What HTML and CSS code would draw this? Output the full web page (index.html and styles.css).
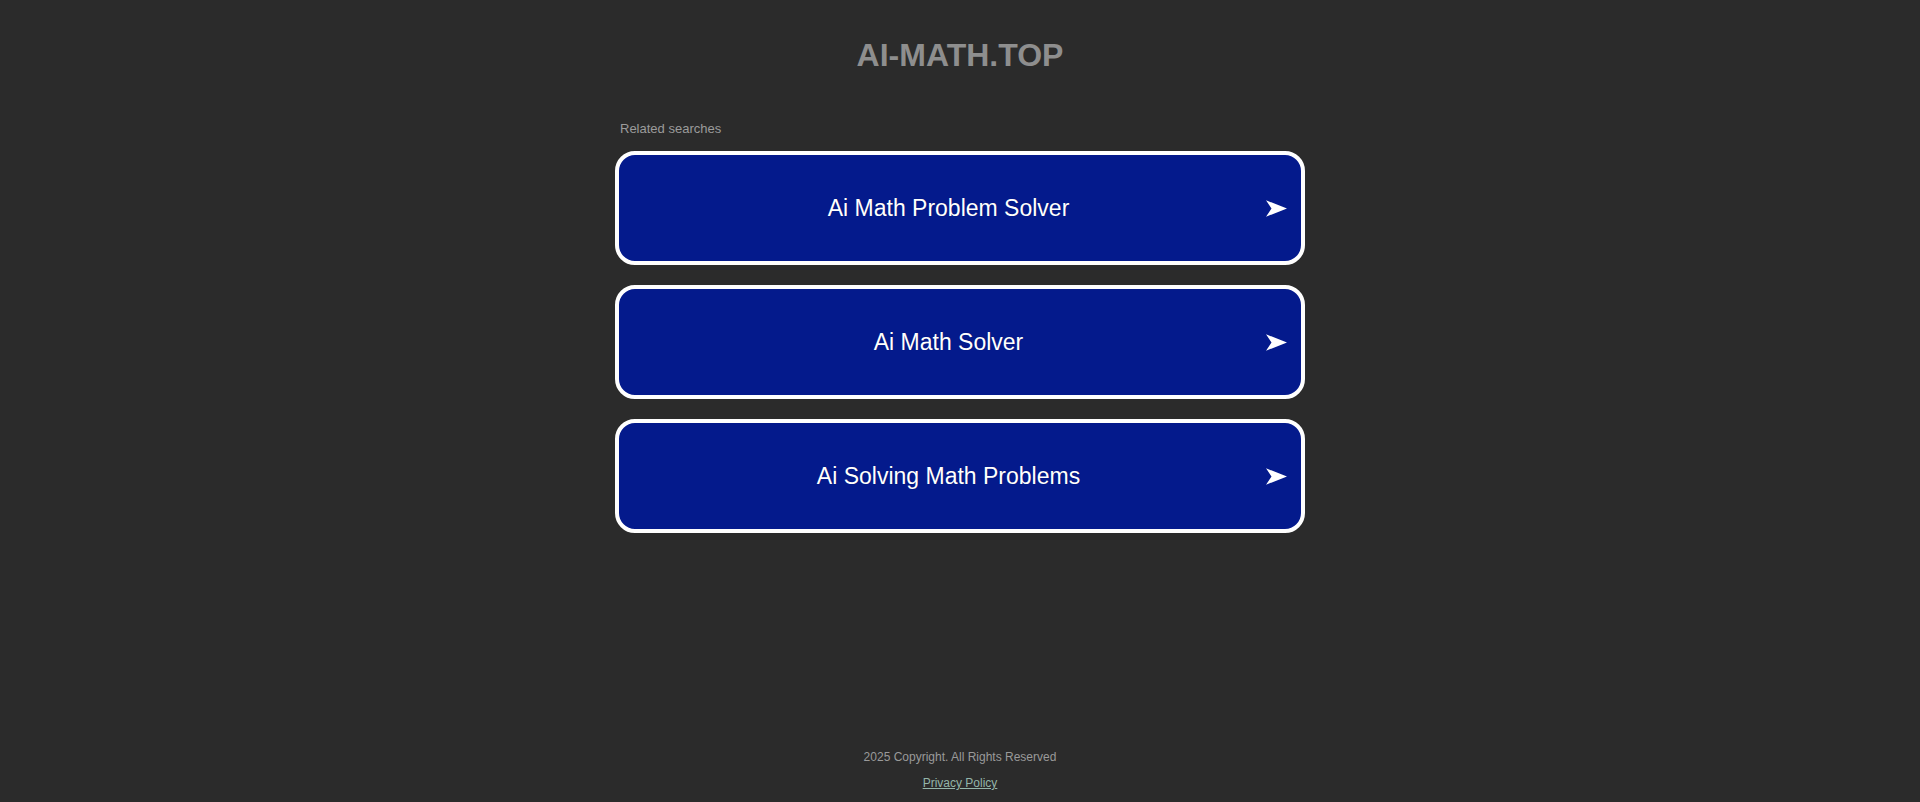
FILE: index.html
```html
<!DOCTYPE html>
<html lang="en">
<head>
<meta charset="utf-8">
<title>ai-math.top</title>
<link rel="stylesheet" href="styles.css">
</head>
<body>
<div class="page">
  <h1 class="title">AI-MATH.TOP</h1>
  <section class="related">
    <div class="label">Related searches</div>
    <div class="list">
      <a class="item" href="#">
        <span class="item-text">Ai Math Problem Solver</span>
        <svg class="arrow" width="21" height="17" viewBox="0 0 21 17"><path d="M0 0.3 L21 8.5 L0 16.7 L5.5 8.5 Z" fill="#fff"/></svg>
      </a>
      <a class="item" href="#">
        <span class="item-text">Ai Math Solver</span>
        <svg class="arrow" width="21" height="17" viewBox="0 0 21 17"><path d="M0 0.3 L21 8.5 L0 16.7 L5.5 8.5 Z" fill="#fff"/></svg>
      </a>
      <a class="item" href="#">
        <span class="item-text">Ai Solving Math Problems</span>
        <svg class="arrow" width="21" height="17" viewBox="0 0 21 17"><path d="M0 0.3 L21 8.5 L0 16.7 L5.5 8.5 Z" fill="#fff"/></svg>
      </a>
    </div>
  </section>
  <footer class="footer">
    <div class="copyright">2025 Copyright. All Rights Reserved</div>
    <div class="privacy"><a href="#">Privacy Policy</a></div>
  </footer>
</div>
</body>
</html>
```

FILE: styles.css
```css
html, body {
  margin: 0;
  padding: 0;
  background: #2b2b2b;
  font-family: "Liberation Sans", Arial, sans-serif;
}

.page {
  min-height: 100vh;
  display: flex;
  flex-direction: column;
  align-items: center;
  box-sizing: border-box;
}

.title {
  margin: 37px 0 0;
  font-size: 32px;
  line-height: 36px;
  font-weight: bold;
  color: #8e8e8e;
}

.related {
  width: 690px;
  margin-top: 48px;
}

.label {
  padding-left: 5px;
  font-size: 13px;
  line-height: 16px;
  color: #9b9b9b;
  margin-bottom: 14px;
}

.list {
  display: flex;
  flex-direction: column;
  gap: 20px;
}

.item {
  height: 114px;
  box-sizing: border-box;
  border: 4px solid #ffffff;
  border-radius: 20px;
  background: #041a8c;
  display: flex;
  align-items: center;
  color: #ffffff;
  text-decoration: none;
}

.item-text {
  flex: 1;
  text-align: center;
  font-size: 23px;
  line-height: 28px;
  margin-right: -12px;
  text-shadow: 0 0 1px rgba(0, 0, 0, 0.3);
}

.arrow {
  flex: none;
  margin-right: 14px;
  display: block;
}

.footer {
  margin-top: auto;
  padding-bottom: 12px;
  text-align: center;
  font-size: 12px;
  line-height: 14px;
  color: #9a9a9a;
}

.copyright {
  margin-bottom: 12px;
}

.privacy a {
  color: #94b5a9;
  text-decoration: underline;
}
```
